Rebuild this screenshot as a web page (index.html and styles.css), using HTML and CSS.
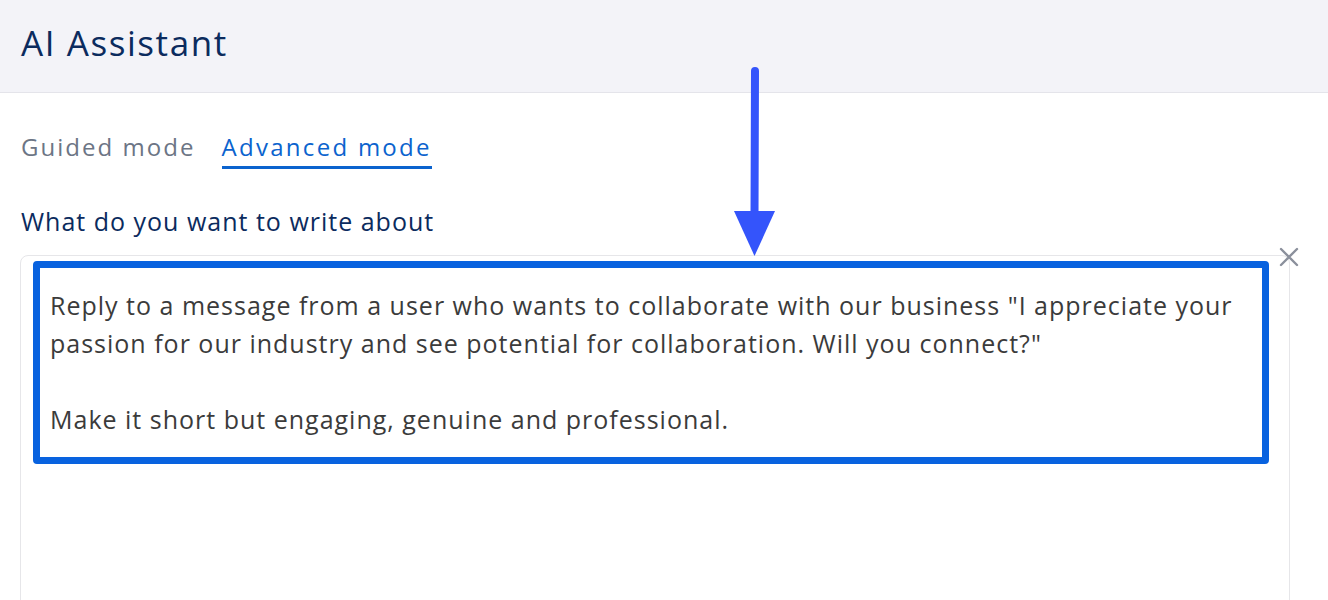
FILE: index.html
```html
<!DOCTYPE html>
<html lang="en">

<head>
  <meta charset="UTF-8">
  <meta name="viewport" content="width=device-width, initial-scale=1.0">
  <title>AI Assistant</title>
  <link rel="stylesheet" href="styles.css">
</head>

<body>
  <header class="topbar">
    <h1>AI Assistant</h1>
  </header>

  <main class="panel">
    <nav class="tabs">
      <a class="tab">Guided mode</a>
      <a class="tab active">Advanced mode</a>
    </nav>

    <label class="field-label" for="prompt">What do you want to write about</label>

    <div class="field">
      <div class="prompt" id="prompt">
        <p>Reply to a message from a user who wants to collaborate with our business "I appreciate your passion for our industry and see potential for collaboration. Will you connect?"</p>
        <p>Make it short but engaging, genuine and professional.</p>
      </div>
      <button class="clear" aria-label="Clear">
        <svg width="20" height="20" viewBox="0 0 20 20">
          <path d="M2 2 L18 18 M18 2 L2 18" stroke="#8b909c" stroke-width="2.4" stroke-linecap="round" />
        </svg>
      </button>
    </div>
  </main>

  <!-- annotation pointing at the prompt -->
  <svg class="arrow" width="50" height="200" viewBox="0 0 50 200">
    <path d="M25 5 L24.5 150" stroke="#3454fb" stroke-width="8" stroke-linecap="round" fill="none" />
    <polygon points="4,145 45,145 24.5,190" fill="#3454fb" />
  </svg>
</body>

</html>
```

FILE: styles.css
```css
* {
  box-sizing: border-box;
}

body {
  margin: 0;
  font-family: "Open Sans", "Noto Sans", sans-serif;
  background: #fff;
  height: 600px;
  overflow: hidden;
  position: relative;
}

.topbar {
  height: 93px;
  background: #f3f3f8;
  border-bottom: 1px solid #e4e4ea;
  padding: 0 21px;
  display: flex;
  align-items: center;

  h1 {
    margin: 0 0 8px;
    font-size: 35px;
    letter-spacing: 0.045em;
    font-weight: 500;
    color: #0b2b5e;
  }
}

.panel {
  padding: 0 38px 0 20px;
}

.tabs {
  display: flex;
  gap: 26px;
  margin-top: 36px;
  padding-left: 1px;

  .tab {
    font-size: 24px;
    letter-spacing: 0.085em;
    color: #6c7585;
    padding-bottom: 1px;
    border-bottom: 3px solid transparent;
    line-height: 36px;
  }

  .active {
    letter-spacing: 0.095em;
    color: #0b63ce;
    border-bottom-color: #0b63ce;
  }
}

.field-label {
  display: block;
  margin-top: 34px;
  padding-left: 1px;
  font-size: 25px;
  letter-spacing: 0.04em;
  color: #0b2b5e;
  line-height: 36px;
}

.field {
  position: relative;
  margin-top: 16px;
  height: 400px;
  border: 1px solid #e6e6e9;
  border-radius: 8px;
  padding: 5px 20px 0 12px;
}

.prompt {
  border: 7px solid #0862df;
  border-radius: 4px;
  padding: 18px 11px 0 10px;
  height: 203px;

  p {
    margin: 0 0 38px;
    font-size: 25px;
    letter-spacing: 0.04em;
    line-height: 38px;
    color: #3b3b3b;
  }
}

.clear {
  position: absolute;
  top: -9px;
  right: -10px;
  border: 0;
  padding: 0;
  background: none;
  display: flex;
}

.arrow {
  position: absolute;
  left: 730px;
  top: 66px;
}
```
